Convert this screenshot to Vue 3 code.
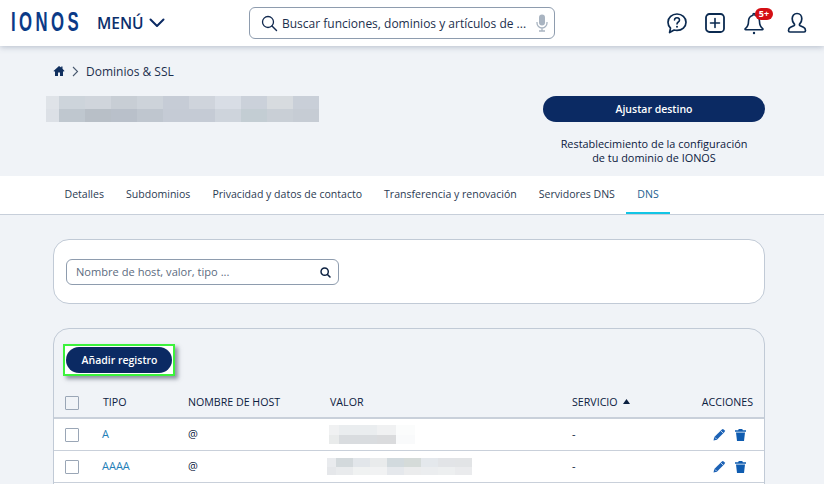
<script setup>
const tabs = ['Detalles', 'Subdominios', 'Privacidad y datos de contacto', 'Transferencia y renovación', 'Servidores DNS', 'DNS']
const titleRows = [
  ['#dfe3e8','#cdd4db','#d0d5dc','#c8ced5','#cdd3da','#c6ccd6','#cfd4dc','#d8dde5','#cbd1da','#d7dbdf','#c9cfd8'],
  ['#dce0e6','#bfc7cf','#b8bfc7','#b9c0ca','#bfc6cf','#c5cbd5','#c5cbd5','#ced4dc','#c3cdd3','#c9cfd6','#c6ccd4']
]
const rows = [
  { type: 'A', host: '@', cls: 'blur-a', blur: ['#f0f1f2','#eaedef','#eaedef','#f0f1f2','#fbfcfc','#e9ebeb','#d9dcdf','#d9dcdf','#dadbdd','#f9fafb'] },
  { type: 'AAAA', host: '@', cls: 'blur-b', blur: ['#e9ebee','#d3d9dc','#e2e6ea','#e9ebec','#d2dade','#d5dbd9','#e4e8ec','#e2e4e7','#e2e4e6',
    '#e5e7ea','#e9ebed','#f0f2f2','#f1f2f3','#e5e8ec','#ebeced','#ebedef','#edeff0','#eaebed'] }
]
</script>

<template>
  <div class="page">
    <header class="top">
      <div class="logo"><span>IONOS</span></div>
      <div class="menu">
        <span>MENÚ</span>
        <svg width="16" height="10" viewBox="0 0 16 10"><path d="M1.5 1.5 8 8l6.5-6.5" fill="none" stroke="#0b2a63" stroke-width="2" stroke-linecap="round" stroke-linejoin="round"/></svg>
      </div>
      <div class="global-search">
        <svg width="17" height="17" viewBox="0 0 17 17"><circle cx="7" cy="7" r="5.5" fill="none" stroke="#11294f" stroke-width="1.3"/><path d="M11 11l4.5 4.5" stroke="#11294f" stroke-width="1.4" stroke-linecap="round"/></svg>
        <span class="gs-text">Buscar funciones, dominios y artículos de ...</span>
        <svg width="12" height="18" viewBox="0 0 12 18"><rect x="3" y="0.5" width="6" height="11" rx="3" fill="#a9b4c1"/><path d="M1 8v1a5 5 0 0 0 10 0V8M6 14v3M3 17h6" fill="none" stroke="#a9b4c1" stroke-width="1.3"/></svg>
      </div>
      <div class="top-icons">
        <svg width="22" height="22" viewBox="0 0 22 22"><path d="M11 2c5 0 9 3.4 9 8.2s-4 8.2-9 8.2c-1 0-2-.1-2.900-.4L3.600 20.500l.9-4.300C2.900 14.700 2 12.600 2 10.200 2 5.400 6 2 11 2z" fill="none" stroke="#0b2a50" stroke-width="1.7" stroke-linejoin="round"/><path d="M8.500 8a2.500 2.300 0 1 1 3.800 2c-.9.6-1.300 1-1.300 2" fill="none" stroke="#0b2a50" stroke-width="1.600" stroke-linecap="round"/><circle cx="11" cy="14.700" r="1" fill="#0b2a50"/></svg>
        <svg width="22" height="22" viewBox="0 0 22 22"><rect x="2" y="2" width="18" height="18" rx="3.500" fill="none" stroke="#0b2a50" stroke-width="1.800"/><path d="M11 6.500v9M6.500 11h9" stroke="#0b2a50" stroke-width="1.600" stroke-linecap="round"/></svg>
        <div class="bell">
          <svg width="22" height="24" viewBox="0 0 22 24"><path d="M11 2.500c-.6 0-1 .5-1 1v.7C6.800 5 5.500 7.600 5.500 10.500c0 3.500-1 5.400-3.200 7.200-.5.4-.2 1 .4 1h16.600c.6 0 .9-.6.400-1-2.200-1.800-3.200-3.700-3.200-7.200 0-2.900-1.300-5.500-4.500-6.300v-.7c0-.5-.4-1-1-1z" fill="none" stroke="#0b2a50" stroke-width="1.600" stroke-linejoin="round"/><circle cx="11" cy="22" r="1.200" fill="#0b2a50"/></svg>
          <span class="badge">5+</span>
        </div>
        <svg class="user" width="20" height="22" viewBox="0 0 20 22"><path d="M10 1.500c3 0 4.800 2.300 4.800 5.200 0 2.200-.9 4-2 5.200-.6.700-.4 1.500.4 1.900l3.300 1.500c1.500.7 2 1.800 2 3.200 0 .8-.5 1.500-1.400 1.500H2.900c-.9 0-1.400-.7-1.400-1.500 0-1.400.5-2.500 2-3.200l3.300-1.500c.8-.4 1-1.200.4-1.900-1.100-1.200-2-3-2-5.200 0-2.900 1.800-5.200 4.800-5.200z" fill="none" stroke="#0b2a50" stroke-width="1.700" stroke-linejoin="round"/></svg>
      </div>
    </header>

    <section class="hero">
      <nav class="crumbs">
        <svg width="12" height="12" viewBox="0 0 12 12"><path d="M6 1 .5 6l.7.8L2 6.100V11h3V7.500h2V11h3V6.100l.8.700.7-.8L9.500 3.800V1.500H8.200v1.100z" fill="#11305f"/></svg>
        <svg width="7" height="11" viewBox="0 0 7 11"><path d="M1 1l4.500 4.500L1 10" fill="none" stroke="#4a5a70" stroke-width="1.100"/></svg>
        <span>Dominios &amp; SSL</span>
      </nav>
      <div class="hero-main">
        <div class="blur-title">
          <div v-for="(row, r) in titleRows" :key="r" class="blur-title-row">
            <i v-for="(c, i) in row" :key="i" :style="{ background: c }"></i>
          </div>
        </div>
        <div class="hero-side">
          <button class="btn wide">Ajustar destino</button>
          <p>Restablecimiento de la configuración<br>de tu dominio de IONOS</p>
        </div>
      </div>
    </section>

    <nav class="tabs">
      <a v-for="t in tabs" :key="t" :class="{ active: t === 'DNS' }">{{ t }}</a>
    </nav>

    <main class="content">
      <div class="card search-card">
        <div class="filter">
          <span class="filter-text">Nombre de host, valor, tipo ...</span>
          <svg width="11" height="11" viewBox="0 0 13 13"><circle cx="5.500" cy="5.500" r="4.300" fill="none" stroke="#0b2040" stroke-width="1.700"/><path d="M8.800 8.800l3 3" stroke="#0b2040" stroke-width="1.900" stroke-linecap="round"/></svg>
        </div>
      </div>

      <div class="card table-card">
        <div class="actions-bar">
          <div class="focus-ring"><button class="btn add">Añadir registro</button></div>
        </div>
        <div class="row head">
          <span class="check"></span>
          <span class="txt">TIPO</span>
          <span class="txt">NOMBRE DE HOST</span>
          <span class="txt">VALOR</span>
          <span class="txt sort">SERVICIO <svg width="7" height="5" viewBox="0 0 7 5"><path d="M3.500 0 7 5H0z" fill="#0b2040"/></svg></span>
          <span class="txt">ACCIONES</span>
        </div>
        <div v-for="r in rows" :key="r.type" class="row body">
          <span class="check"></span>
          <a class="txt type">{{ r.type }}</a>
          <span class="txt">{{ r.host }}</span>
          <div class="blur" :class="r.cls">
            <i v-for="(c, i) in r.blur" :key="i" :style="{ background: c }"></i>
          </div>
          <span class="txt">-</span>
          <span class="icons">
            <svg width="13" height="13" viewBox="0 0 13 13"><path d="M.5 12.500l.8-3.400L8.900 1.500a1.300 1.300 0 0 1 1.800 0l.8.800a1.300 1.300 0 0 1 0 1.800L3.900 11.700z" fill="#1c62b5"/><path d="M2 9.500l1.500 1.500M8 3l2 2" stroke="#fff" stroke-width=".7"/></svg>
            <svg width="11" height="12" viewBox="0 0 11 12"><path d="M0 1.200h3.200L3.700 0h3.600l.5 1.200H11v1.500H0zM1 3.500h9L9 12H2z" fill="#0f5cb0"/></svg>
          </span>
        </div>
        <div class="row body"></div>
      </div>
    </main>
  </div>
</template>

<style scoped>
.page { height: 484px; overflow: hidden; background: #f0f3f7; color: #0b2040; font-family: "Open Sans", sans-serif; font-size: 11px; }
.top { height: 46px; background: #fff; box-shadow: 0 1px 6px rgba(70, 90, 120, .35); display: flex; align-items: center; position: relative; padding-left: 12px; }
.logo { width: 85px; height: 46px; display: flex; align-items: center; margin-top: -2px; }
.logo span { font-family: "Liberation Sans", sans-serif; font-weight: 700; font-size: 27px; letter-spacing: 5.500px; color: #0b3a87; transform: translateX(-1px) scaleX(.62); transform-origin: left center; line-height: 1; }
.menu { width: 152px; display: flex; align-items: center; gap: 5px; font-size: 15.500px; font-weight: 600; color: #0b2f6c; margin-top: -1px; }
.global-search { width: 306px; height: 32px; box-sizing: border-box; border: 1px solid #8e9cae; border-radius: 6px; display: flex; align-items: center; padding: 0 6px 0 11px; gap: 4px; }
.gs-text { flex: 1; font-size: 12px; color: #1c2f4d; white-space: nowrap; }
.top-icons { margin-left: 111px; display: flex; align-items: center; gap: 16px; }
.bell { position: relative; height: 24px; margin: 0 3px 0 1px; }
.user { margin-left: 3px; }
.badge { position: absolute; left: 12px; top: -3px; width: 18px; height: 12px; border-radius: 6px; background: #d40f14; color: #fff; font-size: 9px; font-weight: 700; line-height: 12px; text-align: center; }
.hero { height: 130px; box-sizing: border-box; padding: 15px 59px 0 46px; }
.crumbs { display: flex; align-items: center; gap: 7px; margin-left: 7px; height: 20px; font-size: 12px; color: #1c2f4d; }
.hero-main { display: flex; justify-content: space-between; margin-top: 15px; }
.blur-title-row { display: flex; height: 13px; }
.blur-title-row i { width: 26px; display: block; }
.blur-title-row i:first-child { width: 13px; }
.hero-side { width: 222px; text-align: center; }
.hero-side p { margin: 15px 0 0; font-size: 10.900px; line-height: 14px; color: #0b2040; }
.btn { border: 0; border-radius: 13px; height: 26px; background: #0b2a63; color: #fff; font-family: inherit; font-size: 10.500px; font-weight: 600; padding: 0; }
.wide { width: 222px; display: block; }
.tabs { height: 39px; box-sizing: border-box; background: #fff; border-bottom: 1px solid #c7cfda; display: flex; padding-left: 53.500px; }
.tabs a { padding: 0 11px; height: 38px; box-sizing: border-box; line-height: 36px; font-size: 10.550px; color: #2a3a52; white-space: nowrap; }
.tabs a.active { color: #1c5f8f; border-bottom: 2px solid #12c5e5; padding: 0 11.500px; }
.content { padding: 24px 59px 0 53px; }
.card { border: 1px solid #c1cad6; border-radius: 16px; box-sizing: border-box; }
.search-card { height: 65px; background: #fff; padding: 19px 12px; }
.filter { width: 273px; height: 26px; box-sizing: border-box; border: 1px solid #8e9cae; border-radius: 6px; display: flex; align-items: center; justify-content: space-between; padding: 0 7px 0 9px; font-size: 11.100px; color: #5c6b80; }
.filter-text { margin-top: -2px; }
.table-card { margin-top: 24px; height: 220px; }
.actions-bar { padding: 15px 9px 0; height: 56px; box-sizing: border-box; }
.focus-ring { width: 112px; height: 32px; box-sizing: border-box; border: 2px solid #3cf23c; padding: 1px; box-shadow: 3px 3px 4px rgba(60, 70, 90, .55); background: #fff; }
.add { width: 106px; display: block; padding-left: 1px; }
.row { display: grid; grid-template-columns: 37px 85px 142px 242px 1fr auto; align-items: center; padding: 0 11px 0 12px; height: 32px; box-sizing: border-box; border-bottom: 1px solid #c9d0da; font-size: 11px; }
.head { height: 34px; border-bottom-width: 2px; font-size: 10.650px; color: #0b2040; }
.head .txt { margin-top: 2px; }
.body { background: #fff; }
.body .txt { margin-top: -2px; }
.check { width: 14px; height: 14px; margin-left: -1px; box-sizing: border-box; border: 1.300px solid #9aa6b6; border-radius: 1px; background: #fff; }
.head .check { background: transparent; margin-top: 3px; }
.type { color: #1f7fb8; margin-left: -1px; }
.sort svg { margin: 0 0 2px 3px; }
.icons { display: flex; align-items: center; gap: 9px; margin-right: 7px; }
.blur { display: grid; margin-left: -1px; }
.blur i { display: block; }
.blur-a { grid-template-columns: 10px repeat(4, 19px); grid-auto-rows: 9.500px; }
.blur-b { grid-template-columns: 9px repeat(8, 17px); grid-auto-rows: 8.500px; margin-left: -3px; }
</style>

<style>
html, body { margin: 0; overflow: hidden; }
</style>
